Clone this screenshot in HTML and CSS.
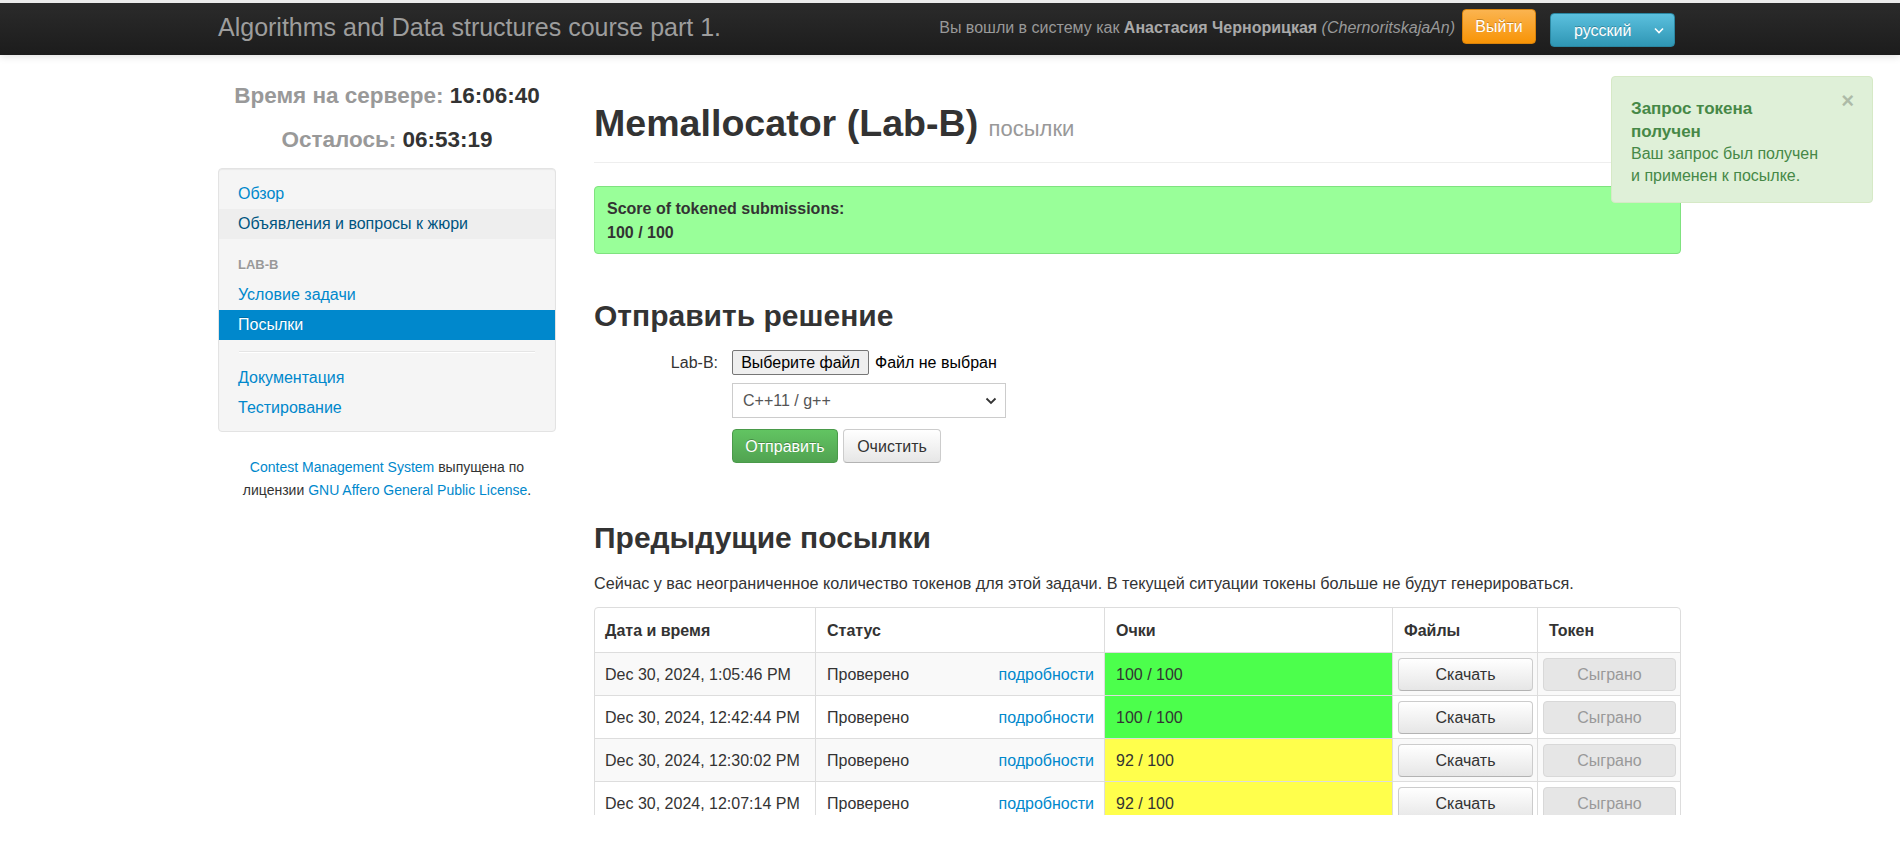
FILE: index.html
```html
<!DOCTYPE html>
<html lang="ru">
<head>
<meta charset="utf-8">
<title>Memallocator (Lab-B) посылки</title>
<link rel="stylesheet" href="styles.css">
</head>
<body>
<div class="navbar">
  <div class="nav-inner">
    <div class="brand">Algorithms and Data structures course part 1.</div>
    <div class="nav-right">
      <span class="login-text">Вы вошли в систему как <b>Анастасия Чернорицкая</b> <i>(ChernoritskajaAn)</i></span>
      <span class="btn-logout">Выйти</span>
      <span class="lang-select">русский
        <svg class="lang-chev" width="10" height="7" viewBox="0 0 10 7"><path d="M1 1.5 L5 5.5 L9 1.5" fill="none" stroke="#fff" stroke-width="1.6"/></svg>
      </span>
    </div>
  </div>
</div>

<div class="page">
  <div class="layout">
    <aside class="sidebar">
      <div class="clock"><span class="clock-label">Время на сервере:</span> 16:06:40</div>
      <div class="clock"><span class="clock-label">Осталось:</span> 06:53:19</div>
      <div class="nav-well">
        <a class="nav-item">Обзор</a>
        <a class="nav-item hover">Объявления и вопросы к жюри</a>
        <div class="nav-header">Lab-B</div>
        <a class="nav-item">Условие задачи</a>
        <a class="nav-item active">Посылки</a>
        <div class="nav-divider"></div>
        <a class="nav-item">Документация</a>
        <a class="nav-item">Тестирование</a>
      </div>
      <p class="footer-note"><a>Contest Management System</a> выпущена по лицензии <a>GNU Affero General Public License</a>.</p>
    </aside>

    <main class="main">
      <div class="page-header">
        <h1>Memallocator (Lab-B) <small>посылки</small></h1>
      </div>
      <div class="score-alert">
        <b>Score of tokened submissions:</b><br>
        <b>100 / 100</b>
      </div>

      <h2 class="section-title first">Отправить решение</h2>
      <div class="submit-form">
        <div class="form-row">
          <label class="form-label">Lab-B:</label>
          <div class="form-controls">
            <div class="file-row">
              <span class="file-btn">Выберите файл</span>
              <span class="file-name">Файл не выбран</span>
            </div>
            <div class="fake-select">
              <span>C++11 / g++</span>
              <svg width="12" height="8" viewBox="0 0 12 8"><path d="M1.5 1.5 L6 6 L10.5 1.5" fill="none" stroke="#333" stroke-width="1.8"/></svg>
            </div>
            <div class="form-actions">
              <span class="btn btn-success">Отправить</span>
              <span class="btn btn-default">Очистить</span>
            </div>
          </div>
        </div>
      </div>

      <h2 class="section-title second">Предыдущие посылки</h2>
      <p class="token-info">Сейчас у вас неограниченное количество токенов для этой задачи. В текущей ситуации токены больше не будут генерироваться.</p>

      <table class="subs">
        <thead>
          <tr>
            <th class="c-date">Дата и время</th>
            <th class="c-status">Статус</th>
            <th class="c-score">Очки</th>
            <th class="c-files">Файлы</th>
            <th class="c-token">Токен</th>
          </tr>
        </thead>
        <tbody>
          <tr class="odd">
            <td>Dec 30, 2024, 1:05:46 PM</td>
            <td><div class="status"><span>Проверено</span><a>подробности</a></div></td>
            <td class="score full">100 / 100</td>
            <td class="btn-cell"><span class="tbtn">Скачать</span></td>
            <td class="btn-cell"><span class="tbtn disabled">Сыграно</span></td>
          </tr>
          <tr>
            <td>Dec 30, 2024, 12:42:44 PM</td>
            <td><div class="status"><span>Проверено</span><a>подробности</a></div></td>
            <td class="score full">100 / 100</td>
            <td class="btn-cell"><span class="tbtn">Скачать</span></td>
            <td class="btn-cell"><span class="tbtn disabled">Сыграно</span></td>
          </tr>
          <tr class="odd">
            <td>Dec 30, 2024, 12:30:02 PM</td>
            <td><div class="status"><span>Проверено</span><a>подробности</a></div></td>
            <td class="score partial">92 / 100</td>
            <td class="btn-cell"><span class="tbtn">Скачать</span></td>
            <td class="btn-cell"><span class="tbtn disabled">Сыграно</span></td>
          </tr>
          <tr>
            <td>Dec 30, 2024, 12:07:14 PM</td>
            <td><div class="status"><span>Проверено</span><a>подробности</a></div></td>
            <td class="score partial">92 / 100</td>
            <td class="btn-cell"><span class="tbtn">Скачать</span></td>
            <td class="btn-cell"><span class="tbtn disabled">Сыграно</span></td>
          </tr>
        </tbody>
      </table>
    </main>
  </div>

  <div class="toast">
    <span class="toast-close">×</span>
    <div class="toast-title">Запрос токена получен</div>
    <div class="toast-body">Ваш запрос был получен и применен к посылке.</div>
  </div>
</div>
</body>
</html>
```

FILE: styles.css
```css
* { box-sizing: border-box; }

html, body {
  margin: 0;
  padding: 0;
  height: 863px;
  overflow: hidden;
}

body {
  font-family: "Liberation Sans", Arial, sans-serif;
  font-size: 16px;
  line-height: 23px;
  color: #333;
  background: #fff;
  border-top: 3px solid #ececec;
}

a { color: #0088cc; text-decoration: none; cursor: pointer; }

/* ---------- navbar ---------- */
.navbar {
  height: 52px;
  background: linear-gradient(to bottom, #2b2b2b, #1c1c1c);
  box-shadow: 0 1px 8px rgba(0,0,0,0.15);
  position: relative;
  z-index: 2;
}
.nav-inner {
  width: 1464px;
  margin: 0 auto;
  height: 100%;
  display: flex;
  align-items: center;
}
.brand {
  font-size: 25px;
  color: #9d9d9d;
  line-height: 30px;
  margin-top: -4px;
}
.nav-right {
  margin-left: auto;
  display: flex;
  align-items: center;
  padding-right: 7px;
}
.login-text {
  color: #999;
  font-size: 16px;
  margin-right: 7px;
  margin-top: -4px;
}
.login-text b { color: #a9a9a9; }
.login-text i { color: #999; }
.btn-logout {
  display: inline-flex;
  align-items: center;
  justify-content: center;
  width: 74px;
  height: 35px;
  margin-top: -6px;
  color: #fff;
  background: linear-gradient(to bottom, #fbb450, #f89406);
  border: 1px solid #d9820a;
  border-radius: 4px;
  text-shadow: 0 -1px 0 rgba(0,0,0,0.25);
}
.lang-select {
  display: inline-flex;
  align-items: center;
  width: 125px;
  height: 34px;
  margin-left: 14px;
  margin-top: 2px;
  padding-left: 23px;
  color: #fff;
  background: linear-gradient(to bottom, #5bc0de, #2f96b4);
  border: 1px solid #2a87a2;
  border-radius: 4px;
  text-shadow: 0 -1px 0 rgba(0,0,0,0.25);
  position: relative;
}
.lang-chev { margin-left: auto; margin-right: 10px; }

/* ---------- page ---------- */
.page {
  position: relative;
  height: 808px;
}
.layout {
  width: 1464px;
  margin: 0 auto;
  display: flex;
  gap: 38px;
}

/* sidebar */
.sidebar {
  width: 338px;
  flex: none;
  padding-top: 19px;
}
.clock {
  text-align: center;
  font-size: 22.5px;
  font-weight: bold;
  line-height: 44px;
  color: #333;
}
.clock-label { color: #999; }

.nav-well {
  margin-top: 6px;
  background: #f5f5f5;
  border: 1px solid #e3e3e3;
  border-radius: 4px;
  padding: 10px 0 8px;
  box-shadow: inset 0 1px 1px rgba(0,0,0,0.05);
}
.nav-item {
  display: block;
  padding: 3px 19px;
  line-height: 24px;
  color: #0088cc;
}
.nav-item.hover { background: #eee; color: #005580; }
.nav-item.active {
  background: #0088cc;
  color: #fff;
  text-shadow: 0 -1px 0 rgba(0,0,0,0.2);
}
.nav-header {
  margin-top: 11px;
  padding: 3px 19px;
  line-height: 24px;
  font-size: 13px;
  font-weight: bold;
  color: #999;
  text-transform: uppercase;
  text-shadow: 0 1px 0 rgba(255,255,255,0.5);
}
.nav-divider {
  height: 2px;
  margin: 11px 20px 10px;
  background: #e5e5e5;
  border-bottom: 1px solid #fff;
}
.footer-note {
  margin: 24px 0 0;
  text-align: center;
  font-size: 14px;
  line-height: 23px;
  padding: 0 20px;
}

/* main */
.main {
  width: 1087px;
  flex: none;
  height: 760px;
  overflow: hidden;
}
.page-header {
  margin-top: 45px;
  padding-bottom: 10px;
  border-bottom: 1px solid #eee;
}
.page-header h1 {
  margin: 0;
  font-size: 37.6px;
  line-height: 46px;
  font-weight: bold;
  color: #333;
}
.page-header small {
  font-size: 22px;
  font-weight: normal;
  color: #999;
}
.score-alert {
  margin-top: 23px;
  padding: 10px 12px 8px;
  line-height: 24px;
  background: #99ff99;
  border: 1px solid #7fe27f;
  border-radius: 4px;
  color: #333;
}
.section-title {
  margin: 0;
  font-size: 30px;
  line-height: 40px;
  font-weight: bold;
  color: #333;
}
.section-title.first { margin-top: 42px; }
.section-title.second { margin-top: 55px; }

.submit-form { margin-top: 14px; }
.form-row { display: flex; }
.form-label {
  width: 124px;
  text-align: right;
  margin-right: 14px;
  line-height: 25px;
}
.form-controls {
  display: flex;
  flex-direction: column;
  align-items: flex-start;
}
.file-row {
  display: flex;
  align-items: center;
  height: 25px;
}
.file-btn {
  display: inline-flex;
  align-items: center;
  height: 25px;
  width: 137px;
  justify-content: center;
  background: #efefef;
  border: 1px solid #767676;
  border-radius: 2px;
  color: #000;
  font-size: 16px;
}
.file-name { margin-left: 6px; color: #000; }
.fake-select {
  margin-top: 8px;
  width: 274px;
  height: 35px;
  border: 1px solid #ccc;
  background: #fff;
  display: flex;
  align-items: center;
  padding: 0 8px 0 10px;
  color: #555;
}
.fake-select svg { margin-left: auto; }
.form-actions {
  margin-top: 11px;
  display: flex;
  gap: 5px;
}
.btn {
  display: inline-flex;
  align-items: center;
  justify-content: center;
  height: 34px;
  border-radius: 4px;
  font-size: 16px;
}
.btn-success {
  width: 106px;
  color: #fff;
  background: linear-gradient(to bottom, #62c462, #51a351);
  border: 1px solid #4a9a4a;
  text-shadow: 0 -1px 0 rgba(0,0,0,0.25);
}
.btn-default {
  width: 98px;
  color: #333;
  background: linear-gradient(to bottom, #fff, #e6e6e6);
  border: 1px solid #ccc;
  border-bottom-color: #b3b3b3;
}

.token-info { margin: 14px 0 12px; font-size: 16.2px; }

/* table */
.subs {
  width: 1087px;
  border-collapse: separate;
  border-spacing: 0;
  border: 1px solid #ddd;
  border-radius: 4px;
  table-layout: fixed;
}
.subs th, .subs td {
  text-align: left;
  vertical-align: middle;
  border-left: 1px solid #ddd;
  border-top: 1px solid #ddd;
  padding: 0 10px 0 11px;
  height: 43px;
}
.subs th { height: 44px; border-top: none; font-weight: bold; }
.subs th:first-child, .subs td:first-child { border-left: none; padding-left: 10px; }
.c-date { width: 220px; }
.c-status { width: 289px; }
.c-score { width: 288px; }
.c-files { width: 145px; }
.subs tr.odd td { background: #f9f9f9; }
.status { display: flex; justify-content: space-between; }
.subs tr td.score.full { background: #4cff4c; }
.subs tr td.score.partial { background: #ffff4c; }
.subs td.btn-cell { padding: 0 4px 0 5px; }
.tbtn {
  display: flex;
  align-items: center;
  justify-content: center;
  height: 33px;
  background: linear-gradient(to bottom, #fff, #e6e6e6);
  border: 1px solid #ccc;
  border-bottom-color: #b3b3b3;
  border-radius: 4px;
  color: #333;
}
.tbtn.disabled {
  background: #e6e6e6;
  border-color: #d8d8d8;
  color: #999;
}

/* toast */
.toast {
  position: absolute;
  top: 21px;
  right: 27px;
  width: 262px;
  height: 127px;
  padding: 20px 51px 0 19px;
  background: #dff0d8;
  border: 1px solid #d6e9c6;
  border-radius: 4px;
  color: #468847;
  line-height: 23px;
}
.toast-title { font-weight: bold; font-size: 17px; }
.toast-body { line-height: 22px; }
.toast-close {
  position: absolute;
  top: 12px;
  right: 18px;
  font-size: 22px;
  font-weight: bold;
  color: #000;
  opacity: 0.22;
}
```
